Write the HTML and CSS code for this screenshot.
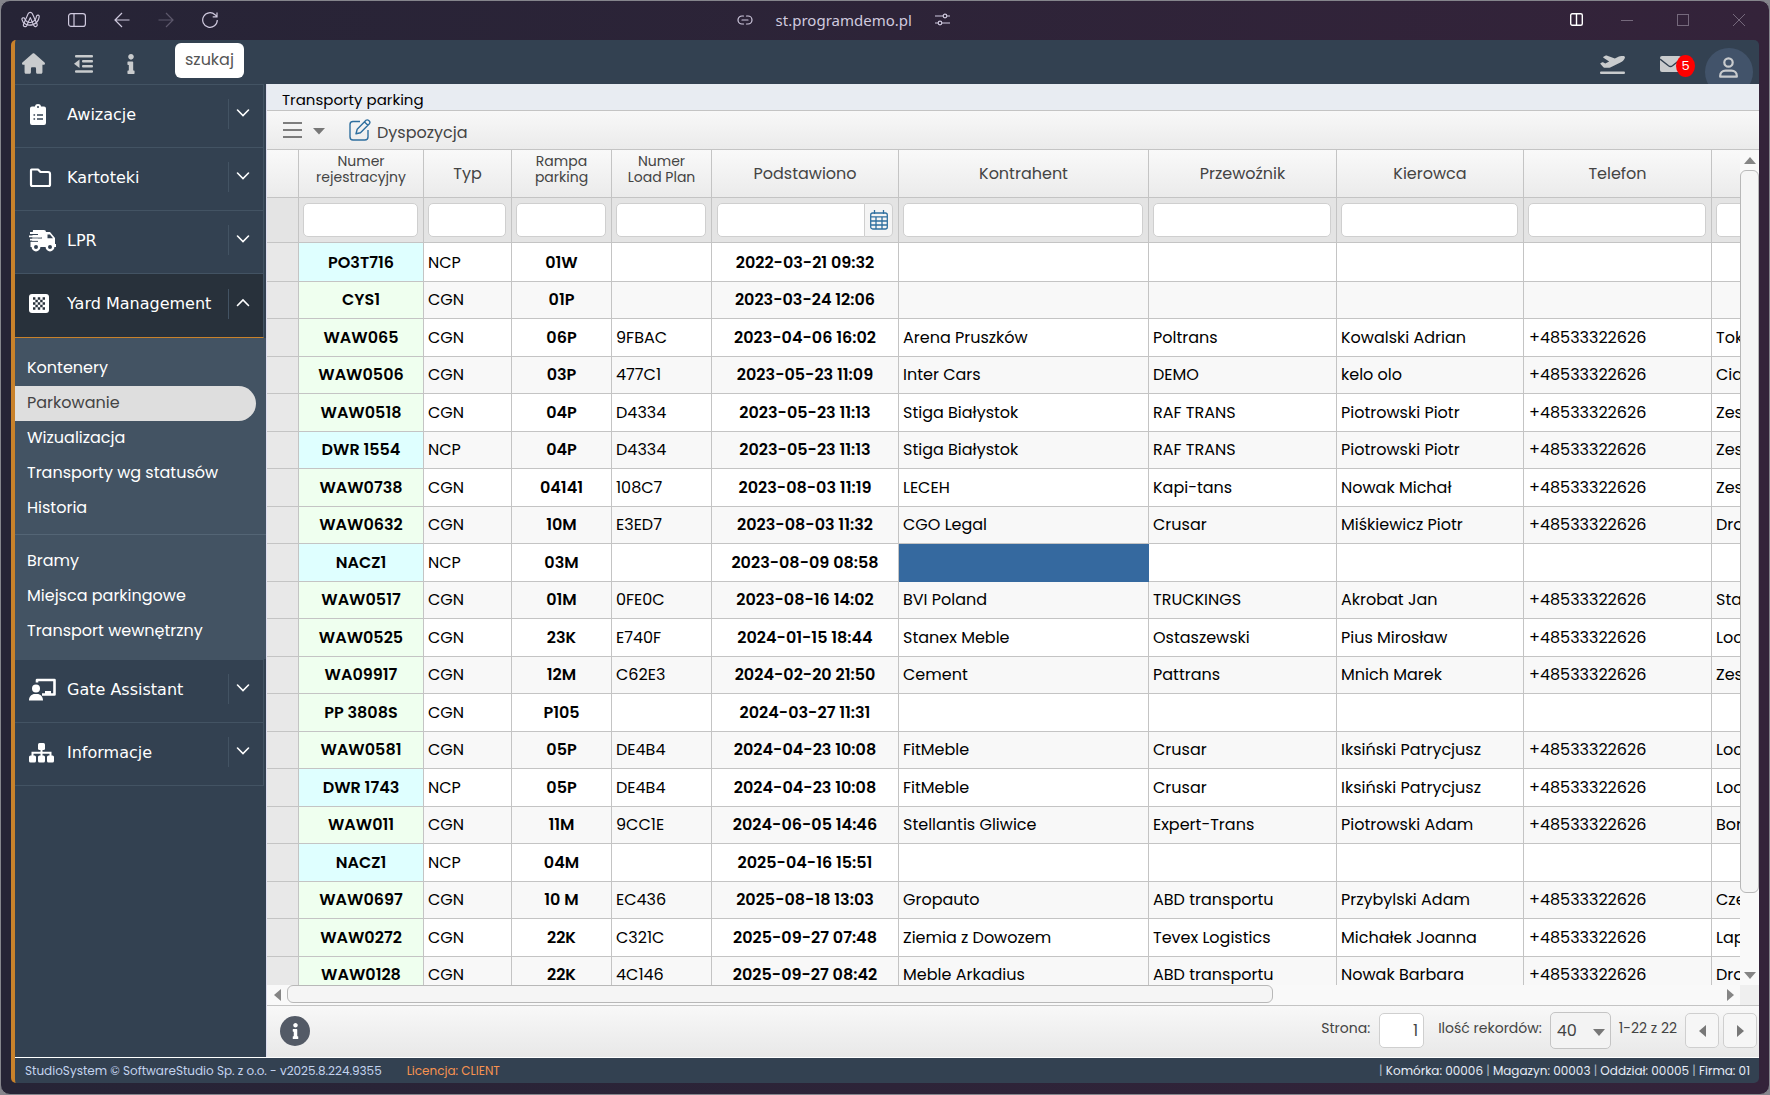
FILE: index.html
```
<!DOCTYPE html>
<html lang="pl">
<head>
    <meta charset="UTF-8">
    <meta name="viewport" content="width=device-width, initial-scale=1.0">
    <title>Transporty parking</title>
    <link rel="stylesheet" href="styles.css">
</head>
<body>
    <svg class="defs" aria-hidden="true">
        <symbol id="down" viewBox="0 0 14 14"><path d="M1.500 4l5.500 5.500L12.500 4" fill="none" stroke="currentColor" stroke-width="1.600" stroke-linecap="round"/></symbol>
        <symbol id="up" viewBox="0 0 14 14"><path d="M1.500 9.500L7 4l5.500 5.500" fill="none" stroke="currentColor" stroke-width="1.600" stroke-linecap="round"/></symbol>
        <symbol id="info" viewBox="0 0 192 512"><path fill="currentColor" d="M20 424.229h20V279.771H20c-11.046 0-20-8.954-20-20V212c0-11.046 8.954-20 20-20h112c11.046 0 20 8.954 20 20v212.229h20c11.046 0 20 8.954 20 20V492c0 11.046-8.954 20-20 20H20c-11.046 0-20-8.954-20-20v-47.771c0-11.046 8.954-20 20-20zM96 0C56.235 0 24 32.235 24 72s32.235 72 72 72 72-32.235 72-72S135.764 0 96 0z"/></symbol>
    </svg>
    <div class="window">
        <header class="titlebar">
            <div class="nav-buttons">
                <button aria-label="Arc"><svg width="19" height="18" viewBox="0 0 20 18"><g fill="none" stroke="currentColor" stroke-width="1.200" stroke-linejoin="round"><path d="M7.500 2.500C8.500.5 11 .5 12 2.500l5 11c.8 2-2.400 3.500-3.500 1.400L9.800 6.500 6 15c-1 2-4.300.7-3.400-1.400z"/><path d="M1 8.500c-.5-2 2.500-2.500 3-.8C5 11 8 12.500 11.500 11 14.500 10 16 7.500 16.300 5c.4-1.800 3.200-1.400 2.900.5-.5 4-3.200 7.200-6.700 8.400C7 15.500 2 13 1 8.500z"/></g></svg></button>
                <button aria-label="Panel boczny"><svg width="18" height="14" viewBox="0 0 18 14"><g fill="none" stroke="currentColor" stroke-width="1.200"><rect x=".6" y=".6" width="16.800" height="12.800" rx="2.500"/><path d="M6 1v12"/></g></svg></button>
                <button aria-label="Wstecz"><svg width="16" height="16" viewBox="0 0 16 16"><path d="M15.500 8H1M8 1L1 8l7 7" fill="none" stroke="currentColor" stroke-width="1.200"/></svg></button>
                <button aria-label="Dalej" class="dim"><svg width="16" height="16" viewBox="0 0 16 16"><path d="M.5 8H15M8 1l7 7-7 7" fill="none" stroke="currentColor" stroke-width="1.200"/></svg></button>
                <button aria-label="Odśwież"><svg width="16" height="16" viewBox="0 0 16 16"><path d="M15.300 8A7.300 7.300 0 1 1 13 2.700l2 2M15 .5v4.300h-4.300" fill="none" stroke="currentColor" stroke-width="1.200"/></svg></button>
            </div>
            <div class="address">
                <svg width="16" height="10" viewBox="0 0 16 10"><path d="M6.500 1H5a4 4 0 0 0 0 8h1.500M9.500 1H11a4 4 0 0 1 0 8H9.500M5 5h6" fill="none" stroke="currentColor" stroke-width="1.200" stroke-linecap="round"/></svg>
                <span>st.programdemo.pl</span>
                <svg width="15" height="13" viewBox="0 0 15 13"><g fill="none" stroke="currentColor" stroke-width="1.200"><path d="M0 3h8M12 3h3M0 10h3M7 10h8"/><circle cx="10" cy="3" r="1.800"/><circle cx="5" cy="10" r="1.800"/></g></svg>
            </div>
            <div class="window-buttons">
                <button aria-label="Podziel" class="split"><svg width="13" height="13" viewBox="0 0 13 13"><g fill="none" stroke="currentColor" stroke-width="1.400"><rect x=".7" y=".7" width="11.600" height="11.600" rx="1.500"/><path d="M6.500 1v11"/></g></svg></button>
                <button aria-label="Minimalizuj"><svg width="12" height="12" viewBox="0 0 12 12"><path d="M0 6.500h12" stroke="currentColor"/></svg></button>
                <button aria-label="Maksymalizuj"><svg width="12" height="12" viewBox="0 0 12 12"><rect x=".5" y=".5" width="11" height="11" fill="none" stroke="currentColor"/></svg></button>
                <button aria-label="Zamknij"><svg width="12" height="12" viewBox="0 0 12 12"><path d="M0 0l12 12M12 0L0 12" stroke="currentColor"/></svg></button>
            </div>
        </header>

        <div class="app">
            <div class="topbar">
                <a href="#" aria-label="Start"><svg width="23" height="21" viewBox="0 0 576 512"><path fill="currentColor" d="M575.800 255.500c0 18-15 32.100-32 32.100h-32l.7 160.200c0 2.700-.2 5.400-.5 8.100V472c0 22.100-17.900 40-40 40H392c-22.100 0-40-17.900-40-40v-88c0-17.700-14.300-32-32-32h-64c-17.700 0-32 14.300-32 32v88c0 22.100-17.900 40-40 40h-80c-22.100 0-40-17.900-40-40V287.600H32c-18 0-32-14-32-32.100 0-9 3-17 10-24L266.400 8c7-7 15-8 22-8s15 2 21 7l255.400 224.500c8 7 12 15 11 24z"/></svg></a>
                <a href="#" class="indent" aria-label="Zwiń menu"><svg width="19" height="18" viewBox="0 0 19 18"><g fill="currentColor"><rect x="1" width="18" height="2.500" rx="1"/><rect x="8" y="5" width="11" height="2.500" rx="1"/><rect x="8" y="10" width="11" height="2.500" rx="1"/><rect x="1" y="15.200" width="18" height="2.500" rx="1"/><path d="M0 8.800l5.500-4.300v8.600z"/></g></svg></a>
                <a href="#" class="help" aria-label="Informacja"><svg width="8" height="20" viewBox="0 0 192 512"><use href="#info"/></svg></a>
                <input class="search" type="text" placeholder="szukaj" aria-label="szukaj">
                <div class="topbar-right">
                    <a href="#" aria-label="Odloty"><svg width="25" height="20" viewBox="0 0 640 512"><path fill="currentColor" d="M381 114.900L186.100 41.800c-16.700-6.200-35.200-5.300-51.100 2.700L89.100 67.400C78 73 77.200 88.500 87.600 95.200l146.900 94.500L136 240 77.800 214.100c-8.700-3.900-18.800-3.700-27.300.6L18.300 230.800c-9.300 4.700-11.800 16.800-5 24.700l73.100 85.300c6.100 7.100 15 11.200 24.300 11.200H248.400c5 0 9.900-1.200 14.300-3.400L535.600 212.200c46.500-23.300 82.500-63.300 100.800-112C645.900 75 627.200 48 600.200 48H542.400c-20.200 0-40.200 4.800-58.200 14L381 114.900zM0 480c0 17.700 14.300 32 32 32H608c17.700 0 32-14.300 32-32s-14.300-32-32-32H32c-17.700 0-32 14.300-32 32z"/></svg></a>
                    <a href="#" class="mail" aria-label="Wiadomości"><svg width="21" height="16" viewBox="0 0 21 16"><rect width="21" height="16" rx="2" fill="currentColor"/><path d="M0 3l8.500 6.800q2 1.400 4 0L21 3" fill="none" stroke="#334151" stroke-width="1.400"/></svg><span class="badge">5</span></a>
                    <a href="#" class="user" aria-label="Użytkownik"><svg width="19" height="21" viewBox="0 0 19 21"><g fill="none" stroke="currentColor" stroke-width="2.200"><circle cx="9.500" cy="5.500" r="4.200"/><path d="M1.200 19.700v-1c0-3 2.300-5 5.300-5h6c3 0 5.300 2 5.300 5v1z" stroke-linejoin="round"/></g></svg></a>
                </div>
            </div>

            <div class="main">
                <nav class="sidebar">
                    <button class="menu-item"><svg width="32" height="23" viewBox="0 0 32 23"><path fill="#fff" d="M3 3.500h3C6 .2 12 .2 12 3.500h3q2 0 2 2V20q0 2-2 2H3q-2 0-2-2V5.500q0-2 2-2z"/><circle cx="9" cy="4" r="1" fill="#334151"/><path stroke="#334151" stroke-width="1.400" d="M4.500 12h1.600M8 12h6M4.500 16h1.600M8 16h6"/></svg><span class="label">Awizacje</span><span class="arrow"><svg width="14" height="14"><use href="#down"/></svg></span></button>
                    <button class="menu-item"><svg width="32" height="23" viewBox="0 0 32 23"><path fill="none" stroke="#fff" stroke-width="2.200" stroke-linejoin="round" d="M2.500 3.500H9L11.500 6H19q2 0 2 2v10.500q0 1.500-1.500 1.500H3.500Q2 20 2 18.500v-14q0-1 .5-1z"/></svg><span class="label">Kartoteki</span><span class="arrow"><svg width="14" height="14"><use href="#down"/></svg></span></button>
                    <button class="menu-item"><svg width="32" height="23" viewBox="0 0 32 23"><path fill="#fff" d="M4 1h11q2 0 2 2h4l5 6v6h1v3H1.500v-6H3z"/><path stroke="#334151" stroke-width="1" d="M0 5.500h9M0 9h13M0 12.300h9"/><path stroke="#fff" stroke-width="1.800" d="M1 4h9M0 7.300h12M1 10.600h8"/><path fill="#334151" d="M18.500 5.500H21l3 3.800h-5.500z"/><circle cx="7" cy="18" r="3.200" fill="#334151" stroke="#fff" stroke-width="2.400"/><circle cx="21" cy="18" r="3.200" fill="#334151" stroke="#fff" stroke-width="2.400"/></svg><span class="label">LPR</span><span class="arrow"><svg width="14" height="14"><use href="#down"/></svg></span></button>
                    <button class="menu-item active"><svg width="32" height="23" viewBox="0 0 32 23"><rect y="2" width="20" height="19" rx="3" fill="#fff"/><path stroke="#28313b" stroke-width="2.400" stroke-dasharray="2.400 2.400" d="M4 6.500h12M6.400 9h9M4 11.500h12M6.400 14h9M4 16.500h12"/></svg><span class="label">Yard Management</span><span class="arrow"><svg width="14" height="14"><use href="#up"/></svg></span></button>
                    <div class="submenu">
                        <a href="#">Kontenery</a>
                        <a href="#" class="current">Parkowanie</a>
                        <a href="#">Wizualizacja</a>
                        <a href="#">Transporty wg statusów</a>
                        <a href="#">Historia</a>
                        <hr>
                        <a href="#">Bramy</a>
                        <a href="#">Miejsca parkingowe</a>
                        <a href="#">Transport wewnętrzny</a>
                    </div>
                    <button class="menu-item"><svg width="32" height="23" viewBox="0 0 32 23"><path fill="none" stroke="#fff" stroke-width="2.600" stroke-linejoin="round" d="M8 4.500V2h17.500v14.500H13"/><path fill="#fff" d="M16 16v-3h6v3zM0 22.500c0-4 2.500-6.500 6-6.500h2c3.500 0 6 2.500 6 6.500z"/><circle cx="7" cy="10.500" r="4" fill="#fff"/></svg><span class="label">Gate Assistant</span><span class="arrow"><svg width="14" height="14"><use href="#down"/></svg></span></button>
                    <button class="menu-item"><svg width="32" height="23" viewBox="0 0 32 23"><g fill="#fff"><rect x="9" y="2" width="7" height="7" rx="1.500"/><rect y="14.500" width="7" height="7" rx="1.500"/><rect x="9" y="14.500" width="7" height="7" rx="1.500"/><rect x="18" y="14.500" width="7" height="7" rx="1.500"/></g><path d="M3.500 15v-3.300h18V15M12.500 8v7" fill="none" stroke="#fff" stroke-width="2"/></svg><span class="label">Informacje</span><span class="arrow"><svg width="14" height="14"><use href="#down"/></svg></span></button>
                </nav>

                <main class="content">
                    <h1>Transporty parking</h1>
                    <div class="toolbar">
                        <button class="burger" aria-label="Menu"><svg width="42" height="16" viewBox="0 0 42 16"><path d="M0 1h19M0 8h19M0 15h19" stroke="#555" stroke-width="1.300"/><path d="M30 6h12l-6 6.500z" fill="#777"/></svg></button>
                        <button class="dispo"><svg width="22" height="22" viewBox="0 0 22 22"><g fill="none" stroke="#2f6f9f" stroke-width="1.400" stroke-linejoin="round"><path d="M11 2.500H4Q1 2.500 1 5.500v12.300Q1 21 4 21h11.800Q19 21 19 18v-7"/><path d="M7 14.800l1.200-4.500 8.800-9q1.400-1 3 .4t.4 3l-8.900 9zM15.500 3l3.400 3.300"/></g></svg><span>Dyspozycja</span></button>
                    </div>

                    <div class="grid">
                        <div class="viewport">
                            <table>
                                <colgroup><col class="w-mark"><col class="w-reg"><col class="w-type"><col class="w-short"><col class="w-short"><col class="w-mid"><col class="w-wide"><col class="w-name"><col class="w-mid"><col class="w-name"><col class="w-mid"></colgroup>
                                <thead>
                                    <tr class="heads"><th></th><th class="two">Numer<br>rejestracyjny</th><th>Typ</th><th class="two">Rampa<br>parking</th><th class="two">Numer<br>Load Plan</th><th>Podstawiono</th><th>Kontrahent</th><th>Przewoźnik</th><th>Kierowca</th><th>Telefon</th><th></th></tr>
                                    <tr class="filters">
                                        <td></td>
                                        <td><input type="text" aria-label="Numer rejestracyjny"></td>
                                        <td><input type="text" aria-label="Typ"></td>
                                        <td><input type="text" aria-label="Rampa parking"></td>
                                        <td><input type="text" aria-label="Numer Load Plan"></td>
                                        <td><div class="date"><input type="text" aria-label="Podstawiono"><button aria-label="Kalendarz"><svg width="18" height="20" viewBox="0 0 18 20"><g fill="none" stroke="#2f6f9f" stroke-width="1.300"><rect x=".7" y="3" width="16.600" height="16" rx="2"/><path d="M1 6.800h16M1 11h16M1 15h16M6 7v12M12 7v12M4.500 0v4M13.500 0v4"/></g></svg></button></div></td>
                                        <td><input type="text" aria-label="Kontrahent"></td>
                                        <td><input type="text" aria-label="Przewoźnik"></td>
                                        <td><input type="text" aria-label="Kierowca"></td>
                                        <td><input type="text" aria-label="Telefon"></td>
                                        <td><input type="text" aria-label="Filtr"></td>
                                    </tr>
                                </thead>
                                <tbody>
                                    <tr><td></td><td class="ncp">PO3T716</td><td>NCP</td><td>01W</td><td></td><td>2022-03-21 09:32</td><td></td><td></td><td></td><td></td><td></td></tr>
                                    <tr><td></td><td class="cgn">CYS1</td><td>CGN</td><td>01P</td><td></td><td>2023-03-24 12:06</td><td></td><td></td><td></td><td></td><td></td></tr>
                                    <tr><td></td><td class="cgn">WAW065</td><td>CGN</td><td>06P</td><td>9FBAC</td><td>2023-04-06 16:02</td><td>Arena Pruszków</td><td>Poltrans</td><td>Kowalski Adrian</td><td>+48533322626</td><td>Tok</td></tr>
                                    <tr><td></td><td class="cgn">WAW0506</td><td>CGN</td><td>03P</td><td>477C1</td><td>2023-05-23 11:09</td><td>Inter Cars</td><td>DEMO</td><td>kelo olo</td><td>+48533322626</td><td>Cia</td></tr>
                                    <tr><td></td><td class="cgn">WAW0518</td><td>CGN</td><td>04P</td><td>D4334</td><td>2023-05-23 11:13</td><td>Stiga Białystok</td><td>RAF TRANS</td><td>Piotrowski Piotr</td><td>+48533322626</td><td>Zes</td></tr>
                                    <tr><td></td><td class="ncp">DWR 1554</td><td>NCP</td><td>04P</td><td>D4334</td><td>2023-05-23 11:13</td><td>Stiga Białystok</td><td>RAF TRANS</td><td>Piotrowski Piotr</td><td>+48533322626</td><td>Zes</td></tr>
                                    <tr><td></td><td class="cgn">WAW0738</td><td>CGN</td><td>04141</td><td>108C7</td><td>2023-08-03 11:19</td><td>LECEH</td><td>Kapi-tans</td><td>Nowak Michał</td><td>+48533322626</td><td>Zes</td></tr>
                                    <tr><td></td><td class="cgn">WAW0632</td><td>CGN</td><td>10M</td><td>E3ED7</td><td>2023-08-03 11:32</td><td>CGO Legal</td><td>Crusar</td><td>Miśkiewicz Piotr</td><td>+48533322626</td><td>Dro</td></tr>
                                    <tr><td></td><td class="ncp">NACZ1</td><td>NCP</td><td>03M</td><td></td><td>2023-08-09 08:58</td><td class="selected"></td><td></td><td></td><td></td><td></td></tr>
                                    <tr><td></td><td class="cgn">WAW0517</td><td>CGN</td><td>01M</td><td>0FE0C</td><td>2023-08-16 14:02</td><td>BVI Poland</td><td>TRUCKINGS</td><td>Akrobat Jan</td><td>+48533322626</td><td>Sta</td></tr>
                                    <tr><td></td><td class="cgn">WAW0525</td><td>CGN</td><td>23K</td><td>E740F</td><td>2024-01-15 18:44</td><td>Stanex Meble</td><td>Ostaszewski</td><td>Pius Mirosław</td><td>+48533322626</td><td>Loc</td></tr>
                                    <tr><td></td><td class="cgn">WA09917</td><td>CGN</td><td>12M</td><td>C62E3</td><td>2024-02-20 21:50</td><td>Cement</td><td>Pattrans</td><td>Mnich Marek</td><td>+48533322626</td><td>Zes</td></tr>
                                    <tr><td></td><td class="cgn">PP 3808S</td><td>CGN</td><td>P105</td><td></td><td>2024-03-27 11:31</td><td></td><td></td><td></td><td></td><td></td></tr>
                                    <tr><td></td><td class="cgn">WAW0581</td><td>CGN</td><td>05P</td><td>DE4B4</td><td>2024-04-23 10:08</td><td>FitMeble</td><td>Crusar</td><td>Iksiński Patrycjusz</td><td>+48533322626</td><td>Loc</td></tr>
                                    <tr><td></td><td class="ncp">DWR 1743</td><td>NCP</td><td>05P</td><td>DE4B4</td><td>2024-04-23 10:08</td><td>FitMeble</td><td>Crusar</td><td>Iksiński Patrycjusz</td><td>+48533322626</td><td>Loc</td></tr>
                                    <tr><td></td><td class="cgn">WAW011</td><td>CGN</td><td>11M</td><td>9CC1E</td><td>2024-06-05 14:46</td><td>Stellantis Gliwice</td><td>Expert-Trans</td><td>Piotrowski Adam</td><td>+48533322626</td><td>Bor</td></tr>
                                    <tr><td></td><td class="ncp">NACZ1</td><td>NCP</td><td>04M</td><td></td><td>2025-04-16 15:51</td><td></td><td></td><td></td><td></td><td></td></tr>
                                    <tr><td></td><td class="cgn">WAW0697</td><td>CGN</td><td>10 M</td><td>EC436</td><td>2025-08-18 13:03</td><td>Gropauto</td><td>ABD transportu</td><td>Przybylski Adam</td><td>+48533322626</td><td>Cze</td></tr>
                                    <tr><td></td><td class="cgn">WAW0272</td><td>CGN</td><td>22K</td><td>C321C</td><td>2025-09-27 07:48</td><td>Ziemia z Dowozem</td><td>Tevex Logistics</td><td>Michałek Joanna</td><td>+48533322626</td><td>Lap</td></tr>
                                    <tr><td></td><td class="cgn">WAW0128</td><td>CGN</td><td>22K</td><td>4C146</td><td>2025-09-27 08:42</td><td>Meble Arkadius</td><td>ABD transportu</td><td>Nowak Barbara</td><td>+48533322626</td><td>Dro</td></tr>
                                </tbody>
                            </table>
                        </div>
                        <div class="scroll vertical">
                            <span class="tip"><svg width="12" height="7"><path d="M0 7h12L6 0z"/></svg></span>
                            <span class="thumb"></span>
                            <span class="rest"></span>
                            <span class="tip"><svg width="12" height="7"><path d="M0 0h12L6 7z"/></svg></span>
                        </div>
                        <div class="scroll horizontal">
                            <span class="tip"><svg width="7" height="12"><path d="M7 0v12L0 6z"/></svg></span>
                            <span class="thumb"></span>
                            <span class="rest"></span>
                            <span class="tip"><svg width="7" height="12"><path d="M0 0v12l7-6z"/></svg></span>
                        </div>
                        <div class="corner"></div>
                    </div>

                    <div class="pager">
                        <button class="about" aria-label="Informacja"><svg width="9" height="16" viewBox="0 0 192 512"><use href="#info"/></svg></button>
                        <label for="page">Strona:</label>
                        <input id="page" type="text" value="1">
                        <label for="size">Ilość rekordów:</label>
                        <div class="select">
                            <select id="size"><option>40</option></select>
                            <svg width="12" height="7"><path d="M0 0h12L6 7z"/></svg>
                        </div>
                        <span>1-22 z 22</span>
                        <div class="pages">
                            <button aria-label="Poprzednia"><svg width="7" height="12"><path d="M7 0v12L0 6z"/></svg></button>
                            <button aria-label="Następna"><svg width="7" height="12"><path d="M0 0v12l7-6z"/></svg></button>
                        </div>
                    </div>
                </main>
            </div>

            <footer class="status">
                <span>StudioSystem © SoftwareStudio Sp. z o.o. - v2025.8.224.9355</span>
                <span class="licence">Licencja: CLIENT</span>
                <span class="place"><i>|</i> Komórka: 00006 <i>|</i> Magazyn: 00003 <i>|</i> Oddział: 00005 <i>|</i> Firma: 01</span>
            </footer>
        </div>
    </div>
</body>
</html>
```
FILE: styles.css
```
*{
    box-sizing: border-box;
}
body{
    margin: 0;
    height: 100vh;
    background-color: #85858c;
    font-family: Poppins, Inter, sans-serif;
    font-size: 16px;
    color: #000;
}
button, input, select{
    font: inherit;
    color: inherit;
}
button{
    padding: 0;
    border: 0;
    background: none;
}
a{
    color: inherit;
    text-decoration: none;
}
svg{
    display: block;
}
.defs{
    position: absolute;
    width: 0;
    height: 0;
}

/* browser window */
.window{
    height: 100%;
    display: flex;
    flex-direction: column;
    padding: 0 10px 11px;
    border: 1px solid #85858c;
    border-radius: 10px;
    background: linear-gradient(90deg, #262436, #34233a);
}
.titlebar{
    flex: 0 0 39px;
    display: grid;
    grid-template-columns: 9fr auto 10fr;
    align-items: center;
    color: #d0cadf;
    padding: 0 14px 2px 10px;
}
.nav-buttons{
    display: flex;
    align-items: center;
    gap: 28px;
}
.nav-buttons .dim{
    color: #5d586c;
}
.address{
    display: flex;
    align-items: center;
    gap: 23px;
    font-family: "Noto Sans", sans-serif;
    font-size: 15px;
}
.window-buttons{
    display: flex;
    justify-content: flex-end;
    gap: 44px;
    color: #75697c;
}
.window-buttons .split{
    color: #fff;
    margin-right: -6px;
}

/* application */
.app{
    flex: 1;
    min-height: 0;
    display: flex;
    flex-direction: column;
    border-left: 4px solid #c9822b;
    border-radius: 5px;
    overflow: hidden;
    background-color: #334151;
}
.topbar{
    flex: 0 0 44px;
    display: flex;
    align-items: center;
    padding: 3px 0 0 7px;
    color: #c9cbcd;
    overflow: hidden;
}
.indent{
    margin-left: 29px;
}
.help{
    margin-left: 34px;
}
.search{
    width: 69px;
    height: 35px;
    margin: 0 0 6px 40px;
    padding: 0 10px 3px;
    border: 0;
    border-radius: 6px;
    background-color: #fff;
}
.search::placeholder{
    color: #555;
    opacity: 1;
}
.topbar-right{
    margin-left: auto;
    display: flex;
    align-items: center;
    padding-right: 6px;
}
.mail{
    position: relative;
    margin: 0 24px 0 35px;
}
.badge{
    position: absolute;
    left: 16px;
    top: -1px;
    width: 19px;
    height: 22px;
    border-radius: 50%;
    background-color: #f00;
    color: #fff;
    font-size: 13px;
    line-height: 22px;
    text-align: center;
}
.user{
    width: 48px;
    height: 48px;
    margin-top: 16px;
    padding: 9px 14px;
    border-radius: 50%;
    background-color: #42536a;
}
.main{
    flex: 1;
    min-height: 0;
    display: flex;
}

/* sidebar */
.sidebar{
    flex: 0 0 251px;
    color: #fff;
}
.menu-item{
    width: 249px;
    height: 63px;
    display: flex;
    align-items: center;
    padding: 0 13px 4px 14px;
    border-top: 1px solid #435363;
    border-right: 1px solid #435363;
    font-family: Verdana, "DejaVu Sans", sans-serif;
    text-align: left;
}
.menu-item:last-child{
    height: 64px;
    border-bottom: 1px solid #435363;
}
.menu-item.active{
    height: 65px;
    background-color: #28313b;
    border-bottom: 1px solid #c9822b;
}
.label{
    margin-left: 6px;
    white-space: nowrap;
}
.arrow{
    margin-left: auto;
    padding: 7px 0 9px 7px;
    border-left: 1px solid #435363;
}
.submenu{
    padding: 13px 0 10px;
    background-color: #435363;
}
.submenu a{
    display: block;
    height: 35px;
    margin-right: 10px;
    padding-left: 12px;
    line-height: 34px;
}
.submenu .current{
    border-radius: 0 18px 18px 0;
    background-color: #dedede;
    color: #444;
}
.submenu hr{
    height: 1px;
    margin: 8px 0 9px;
    border: 0;
    background-color: #546575;
}

/* content */
.content{
    flex: 1;
    min-width: 0;
    display: flex;
    flex-direction: column;
    border-left: 1px solid #dde;
    background-color: #fff;
    color: #444;
}
h1{
    height: 27px;
    margin: 0;
    padding: 2px 15px 0;
    border-bottom: 1px solid #c4c4c4;
    background-color: #e8ecf2;
    color: #000;
    font-size: 15px;
    font-weight: normal;
    line-height: 27px;
}
.toolbar{
    height: 39px;
    display: flex;
    align-items: center;
    gap: 24px;
    padding: 0 16px;
    border-bottom: 1px solid #c4c4c4;
    background: linear-gradient(#f8f8f8, #ebebeb);
}
.dispo{
    display: flex;
    align-items: center;
    gap: 6px;
}
.dispo span{
    padding-top: 4px;
}
.grid{
    flex: 1;
    min-height: 0;
    display: grid;
    grid-template-columns: minmax(0, 1fr) 19px;
    grid-template-rows: minmax(0, 1fr) 20px;
}
.viewport{
    overflow: hidden;
}
table{
    width: 1632px;
    table-layout: fixed;
    border-collapse: separate;
    border-spacing: 0;
    color: #000;
}
.w-mark{ width: 32px; }
.w-reg{ width: 125px; }
.w-type{ width: 88px; }
.w-short{ width: 100px; }
.w-mid{ width: 187px; }
.w-name{ width: 188px; }
.w-wide{ width: 250px; }
th, td{
    padding: 0 4px;
    border-right: 1px solid #c4c4c4;
    border-bottom: 1px solid #c4c4c4;
    white-space: nowrap;
    overflow: hidden;
}
th{
    color: #444;
    font-weight: normal;
    background: linear-gradient(#f9f9f9, #ebebeb);
}
.heads{
    height: 48px;
}
th.two{
    padding-bottom: 9px;
    font-size: 14px;
    line-height: 16px;
}
.filters{
    height: 45px;
}
.filters td{
    padding-right: 5px;
    background-color: #e4e4e4;
}
.filters input{
    display: block;
    width: 100%;
    height: 34px;
    border: 1px solid #cfcfcf;
    border-radius: 5px;
    background-color: #fff;
}
.date{
    display: flex;
    padding-left: 1px;
}
.date input{
    min-width: 0;
    border-radius: 5px 0 0 5px;
}
.date button{
    flex: 0 0 28px;
    display: grid;
    place-items: center;
    border: 1px solid #cfcfcf;
    border-left: 0;
    border-radius: 0 5px 5px 0;
    background-color: #f4f4f4;
}
tbody tr{
    height: 38px;
}
tbody tr:first-child{
    height: 39px;
}
tbody tr:nth-child(even){
    height: 37px;
    background-color: #f8f8f8;
}
tbody tr:nth-child(even) td{
    padding-bottom: 2px;
}
tbody td:nth-child(1){
    background-color: #e8e8e8;
}
tbody td:nth-child(2), tbody td:nth-child(4), tbody td:nth-child(6){
    font-weight: 600;
    text-align: center;
}
tbody td:nth-child(10){
    padding-left: 5px;
}
.ncp{
    background-color: #dfffff;
}
.cgn{
    background-color: #efffef;
}
.selected{
    background-color: #35699f;
    border-color: #35699f;
}

/* scrollbars */
.scroll{
    display: flex;
    background-color: #f9f9f9;
    fill: #858585;
}
.vertical{
    flex-direction: column;
}
.tip{
    flex: 0 0 20px;
    display: grid;
    place-items: center;
}
.thumb{
    border: 1px solid #b8b8b8;
    border-radius: 6px;
    background-color: #f5f5f5;
}
.vertical .thumb{
    flex: 10;
}
.horizontal .thumb{
    flex: 11;
    margin-bottom: 2px;
}
.vertical .rest{
    flex: 1;
}
.horizontal .rest{
    flex: 5;
}
.corner{
    background-color: #efefef;
}

/* pager */
.pager{
    height: 52px;
    display: flex;
    align-items: center;
    padding: 0 2px 2px 13px;
    border-top: 1px solid #c4c4c4;
    background: linear-gradient(#f8f8f8, #e8e8e8);
    font-size: 14px;
    fill: #777;
}
.pager label, .pager > span{
    padding-bottom: 4px;
}
.about{
    width: 30px;
    height: 30px;
    margin-right: auto;
    display: grid;
    place-items: center;
    border-radius: 50%;
    background-color: #535a66;
    color: #fff;
}
.pager input{
    width: 45px;
    height: 35px;
    margin: 0 14px 0 9px;
    padding: 0 5px;
    border: 1px solid #cfcfcf;
    border-radius: 5px;
    background-color: #fff;
    font-size: 16px;
    text-align: right;
}
.select{
    position: relative;
    margin: 0 8px;
}
.select select{
    display: block;
    width: 61px;
    height: 37px;
    padding: 0 6px;
    appearance: none;
    border: 1px solid #c4c4c4;
    border-radius: 5px;
    background-color: #f3f3f3;
    font-size: 16px;
}
.select svg{
    position: absolute;
    right: 6px;
    top: 17px;
    pointer-events: none;
}
.pages{
    display: flex;
    gap: 4px;
    margin-left: 8px;
}
.pages button{
    width: 34px;
    height: 35px;
    display: grid;
    place-items: center;
    border: 1px solid #cfcfcf;
    border-radius: 5px;
    background-color: #f6f6f6;
}

/* status bar */
.status{
    flex: 0 0 26px;
    display: flex;
    align-items: center;
    gap: 25px;
    padding: 0 9px 0 10px;
    border-top: 1px solid #fff;
    color: #c3d3ee;
    font-size: 12px;
}
.licence{
    color: #f79350;
}
.place{
    margin-left: auto;
    color: #e6ecf7;
}
.place i{
    font-style: normal;
    color: #a9b4c2;
}
```
